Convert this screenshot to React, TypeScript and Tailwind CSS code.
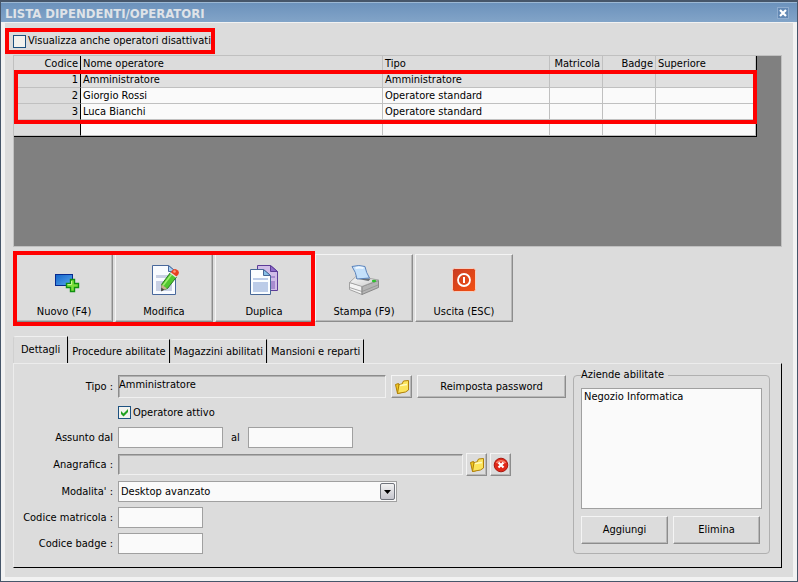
import type { ReactNode } from "react";

const operators = [
  { code: 1, name: "Amministratore", type: "Amministratore" },
  { code: 2, name: "Giorgio Rossi", type: "Operatore standard" },
  { code: 3, name: "Luca Bianchi", type: "Operatore standard" },
];

const tabs = ["Dettagli", "Procedure abilitate", "Magazzini abilitati", "Mansioni e reparti"];

const raised =
  "border border-t-[#f4f4f4] border-l-[#f4f4f4] border-r-[#8c8c8c] border-b-[#8c8c8c] bg-[#dcdcdc] shadow-[inset_-1px_-1px_0_#b8b8b8]";
const sunken =
  "border border-t-[#8c8c8c] border-l-[#8c8c8c] border-r-[#f0f0f0] border-b-[#f0f0f0] bg-[#dcdcdc] shadow-[inset_1px_1px_0_#b0b0b0]";
const textBox = "h-[21px] border border-[#a0a0a0] bg-[#fafafa] px-1 outline-none";

function NewIcon() {
  return (
    <svg width="32" height="32" viewBox="0 0 32 32">
      <defs>
        <linearGradient id="screen" x1="0" y1="0" x2="1" y2="1">
          <stop offset="0" stopColor="#1264c8" />
          <stop offset="1" stopColor="#5aa8f0" />
        </linearGradient>
      </defs>
      <rect x="7.5" y="10.5" width="17" height="11" fill="url(#screen)" stroke="#062a90" />
      <path
        d="M22.5 15.5h4v4h4v4h-4v4h-4v-4h-4v-4h4z"
        fill="#7ce03c"
        stroke="#109010"
        strokeWidth="1.4"
      />
      <path d="M23.5 17v3.5h-4" fill="none" stroke="#c8f890" />
    </svg>
  );
}

function EditIcon() {
  return (
    <svg width="32" height="32" viewBox="0 0 32 32">
      <path d="M4.5 1.5h16l7 6v23h-23z" fill="#f8fbff" stroke="#48689c" />
      <path d="M20.5 1.5v6h7z" fill="#a8d0f4" stroke="#48689c" />
      <path d="M8 11h16v3H8zM8 17h16v10H8z" fill="#c8d0e4" />
      <path d="M22.5 8.5l6 4.5-9 11.5-5.5 1.5-.5-5.5z" fill="#50c830" stroke="#2c7820" />
      <path d="M23.5 10.5L15 21.5" stroke="#a0f070" strokeWidth="1.5" />
      <path d="M13.5 20.5l5.500 4-6 2.5z" fill="#c8b090" />
      <path d="M13.3 23.5l3 2.2-3.3 1.8z" fill="#444" />
      <path d="M22.5 8.5l6 4.5" stroke="#e8e8e8" strokeWidth="2" />
      <path d="M24 6.5q3-3 6 0 2.5 3-1.5 6l-5.5-4z" fill="#e84020" />
      <circle cx="26.5" cy="7.5" r="1.3" fill="#ff9878" />
    </svg>
  );
}

function CopyIcon() {
  return (
    <svg width="32" height="32" viewBox="0 0 32 32">
      <path d="M9.5 1.5h13l7 6v19h-20z" fill="#d0bce8" stroke="#5c3c98" />
      <path d="M22.5 1.5v6h7z" fill="#8c68c8" stroke="#5c3c98" />
      <path d="M23 12h4v2h-4zM23 17h4v8h-4z" fill="#a88cd0" />
      <path d="M2.5 5.5h13l7 6v19h-20z" fill="#fafdff" stroke="#486898" />
      <path d="M15.5 5.5v6h7z" fill="#88c0e8" stroke="#486898" />
      <path d="M5 14h15v2H5zM5 18h15v10H5z" fill="#bccce8" />
    </svg>
  );
}

function PrinterIcon() {
  return (
    <svg width="32" height="32" viewBox="0 0 32 32">
      <defs>
        <linearGradient id="lid" x1="0" y1="0" x2="1" y2="1">
          <stop offset="0" stopColor="#fafafa" />
          <stop offset="1" stopColor="#cccccc" />
        </linearGradient>
      </defs>
      <path d="M1.5 18.5v7L14 30.5V22z" fill="#f4f4f4" stroke="#909090" strokeWidth=".8" />
      <path d="M14 22.5l16.5-6v7L14 30.5z" fill="#b4b4b4" stroke="#787878" strokeWidth=".8" />
      <path d="M1.5 18.5L8.5 12l22 4L14 22.5z" fill="url(#lid)" stroke="#989898" strokeWidth=".8" />
      <path d="M7.5 14.500l2-1.500 13 2-2 2z" fill="#6c7074" />
      <path d="M4 2.500q7-2 13 0 1 6 4.500 11.500L9 15Q8 8 4 2.500z" fill="#c4e0fa" stroke="#5c84bc" />
      <path d="M7.5 4q4-1 8 0" fill="none" stroke="#f0f8ff" strokeWidth="2" />
      <path d="M1.5 23.500L14 27.500 30 21" fill="none" stroke="#909090" strokeWidth=".8" />
      <ellipse cx="26" cy="17" rx="2.2" ry="1.3" fill="#30c030" />
    </svg>
  );
}

function PowerIcon() {
  return (
    <svg width="32" height="32" viewBox="0 0 32 32">
      <defs>
        <linearGradient id="power" x1="0" y1="0" x2="1" y2="1">
          <stop offset="0" stopColor="#c83c24" />
          <stop offset="1" stopColor="#f45010" />
        </linearGradient>
      </defs>
      <rect x="4.5" y="4.5" width="23" height="23" rx="2" fill="url(#power)" stroke="#f8d0c0" />
      <circle cx="16" cy="16" r="6" fill="none" stroke="#fff" strokeWidth="1.8" />
      <path d="M16 13v6" stroke="#fff" strokeWidth="2" />
    </svg>
  );
}

function FolderIcon() {
  return (
    <svg width="16" height="16" viewBox="0 0 16 16">
      <path d="M1.5 5.5l3-1 3 9-4 1z" fill="#f0c820" stroke="#b08008" />
      <path d="M3.5 14.5l1.5-9 3-.5 1.5-3 5-.5v9.5l-3 2z" fill="#fce45c" stroke="#b08008" />
      <path d="M6 6.5l7-1" stroke="#fffbc0" strokeWidth="1.5" />
    </svg>
  );
}

function RemoveIcon() {
  return (
    <svg width="16" height="16" viewBox="0 0 16 16">
      <circle cx="8" cy="8" r="6.8" fill="#e02818" stroke="#a81810" />
      <path d="M3.5 6a5 4 0 019 0" fill="none" stroke="#f88870" strokeWidth="1.5" />
      <path d="M5.5 5.5l5 5m0-5l-5 5" stroke="#fff" strokeWidth="2.2" />
    </svg>
  );
}

const actions = [
  { label: "Nuovo (F4)", icon: <NewIcon /> },
  { label: "Modifica", icon: <EditIcon /> },
  { label: "Duplica", icon: <CopyIcon /> },
  { label: "Stampa (F9)", icon: <PrinterIcon /> },
  { label: "Uscita (ESC)", icon: <PowerIcon /> },
];

function ActionButton({ label, icon }: { label: string; icon: ReactNode }) {
  return (
    <button type="button" className={`flex h-[68px] w-[98px] flex-col items-center gap-[9px] pt-[9px] ${raised}`}>
      {icon}
      <span>{label}</span>
    </button>
  );
}

function CheckBox({ label, checked }: { label: string; checked?: boolean }) {
  return (
    <label className="flex items-center gap-[2px]">
      <span className="grid">
        <input
          type="checkbox"
          defaultChecked={checked}
          className="peer col-start-1 row-start-1 size-[13px] appearance-none border border-[#1c5180] bg-[#f2f2ee]"
        />
        <svg
          viewBox="0 0 13 13"
          className="pointer-events-none invisible col-start-1 row-start-1 size-[13px] peer-checked:visible"
        >
          <path d="M3 5v3l2.5 2.5L10 6V3L5.5 7.5z" fill="#21a121" />
        </svg>
      </span>
      {label}
    </label>
  );
}

function FieldLabel({ id, children }: { id: string; children: ReactNode }) {
  return (
    <label htmlFor={id} className="pr-[5px] text-right whitespace-nowrap">
      {children}
    </label>
  );
}

function OperatorTable() {
  const cell = "h-4 border-r border-b border-[#c0c0c0] px-[2px] pt-px pb-0 whitespace-nowrap";
  const codeCell = "h-4 border-r border-b border-r-black border-b-[#c0c0c0] bg-[#dcdcdc] px-[2px] pt-px pb-0 text-right";
  return (
    <div className="h-[192px] border border-[#c0c0c0] bg-[#808080] pr-6">
      <div className="relative">
        <table className="w-full table-fixed border-separate border-spacing-0 border-r border-b border-black text-left">
          <colgroup>
            <col className="w-[67px]" />
            <col />
            <col className="w-[167px]" />
            <col className="w-[53px]" />
            <col className="w-[53px]" />
            <col className="w-[100px]" />
          </colgroup>
          <thead className="bg-[#dcdcdc]">
            <tr>
              <th className={`${codeCell} font-normal`}>Codice</th>
              <th className={`${cell} font-normal`}>Nome operatore</th>
              <th className={`${cell} font-normal`}>Tipo</th>
              <th className={`${cell} text-right font-normal`}>Matricola</th>
              <th className={`${cell} text-right font-normal`}>Badge</th>
              <th className={`${cell} font-normal`}>Superiore</th>
            </tr>
          </thead>
          <tbody className="bg-[#fafafa]">
            {operators.map((op) => (
              <tr key={op.code} className="first:bg-[#e0e0e0]">
                <td className={codeCell}>{op.code}</td>
                <td className={cell}>{op.name}</td>
                <td className={cell}>{op.type}</td>
                <td className={cell} />
                <td className={cell} />
                <td className={cell} />
              </tr>
            ))}
            <tr>
              <td className={codeCell} />
              <td className={cell} />
              <td className={cell} />
              <td className={cell} />
              <td className={cell} />
              <td className={cell} />
            </tr>
          </tbody>
        </table>
        {/* Highlight around the operator rows */}
        <div className="pointer-events-none absolute inset-x-0 top-[14px] h-[54px] border-4 border-[#ff0000]" />
      </div>
    </div>
  );
}

function Details() {
  return (
    <div className="grid flex-1 grid-cols-[104px_1fr] content-start items-center gap-y-[5px]">
      <FieldLabel id="tipo">Tipo :</FieldLabel>
      <div className="flex h-[23px] gap-[5px]">
        <input id="tipo" readOnly defaultValue="Amministratore" className={`min-w-0 flex-1 pb-1 outline-none ${sunken}`} />
        <button type="button" aria-label="Scegli tipo" className={`grid w-[21px] place-items-center ${raised}`}>
          <FolderIcon />
        </button>
        <button type="button" className={`w-[149px] ${raised}`}>
          Reimposta password
        </button>
      </div>

      <div className="col-start-2 flex h-[19px] items-center">
        <CheckBox label="Operatore attivo" checked />
      </div>

      <FieldLabel id="dal">Assunto dal</FieldLabel>
      <div className="flex items-center gap-2">
        <input id="dal" className={`w-[105px] ${textBox}`} />
        <label htmlFor="al">al</label>
        <input id="al" className={`w-[105px] ${textBox}`} />
      </div>

      <FieldLabel id="anagrafica">Anagrafica :</FieldLabel>
      <div className="flex h-[23px] items-center gap-[3px] pr-[55px]">
        <input id="anagrafica" readOnly className={`h-[21px] min-w-0 flex-1 outline-none ${sunken}`} />
        <button type="button" aria-label="Scegli anagrafica" className={`grid h-[23px] w-[21px] place-items-center ${raised}`}>
          <FolderIcon />
        </button>
        <button type="button" aria-label="Rimuovi anagrafica" className={`grid h-[23px] w-[21px] place-items-center ${raised}`}>
          <RemoveIcon />
        </button>
      </div>

      <FieldLabel id="modalita">Modalita' :</FieldLabel>
      <div className="grid w-[279px] items-center">
        <select
          id="modalita"
          className="col-start-1 row-start-1 h-[21px] appearance-none border border-[#a0a0a0] bg-[#fafafa] px-[2px] outline-none"
        >
          <option>Desktop avanzato</option>
        </select>
        <svg width="15" height="17" viewBox="0 0 15 17" className="pointer-events-none col-start-1 row-start-1 mr-[2px] justify-self-end">
          <defs>
            <linearGradient id="drop" x1="0" y1="0" x2="0" y2="1">
              <stop offset="0" stopColor="#f4f4f4" />
              <stop offset="1" stopColor="#c4c4cc" />
            </linearGradient>
          </defs>
          <rect x=".5" y=".5" width="14" height="16" rx="1.5" fill="url(#drop)" stroke="#70747c" />
          <path d="M4 7h7l-3.5 4z" fill="#000" />
        </svg>
      </div>

      <FieldLabel id="matricola">Codice matricola :</FieldLabel>
      <input id="matricola" className={`w-[85px] ${textBox}`} />

      <FieldLabel id="badge">Codice badge :</FieldLabel>
      <input id="badge" className={`w-[85px] ${textBox}`} />
    </div>
  );
}

function Companies() {
  return (
    <fieldset className="flex w-[197px] flex-col rounded-[4px] border border-[#b0b0b0] px-[7px] pb-[9px]">
      <legend className="pr-1 leading-4">Aziende abilitate</legend>
      <select
        size={8}
        aria-label="Aziende abilitate"
        className="mt-[5px] h-[121px] w-full appearance-none overflow-hidden border border-[#a0a0a0] bg-[#fafafa] outline-none"
      >
        <option className="px-[2px] py-px">Negozio Informatica</option>
      </select>
      <div className="mt-[7px] flex gap-[5px] pr-[2px]">
        <button type="button" className={`h-7 flex-1 ${raised}`}>Aggiungi</button>
        <button type="button" className={`h-7 flex-1 ${raised}`}>Elimina</button>
      </div>
    </fieldset>
  );
}

export default function App() {
  return (
    <div className="flex min-h-screen flex-col border-t-2 border-r border-b border-l border-[#46566a] bg-[#dcdcdc] font-['DejaVu_Sans_Condensed','DejaVu_Sans',sans-serif] text-[11px] leading-[14px] text-black">
      <header className="flex h-5 items-center justify-between border-t border-[#9cb8d4] bg-linear-to-b from-[#6c92bc] to-[#82a4c8] pr-2 pl-1">
        <h1 className="pt-[2px] text-[13px] font-bold text-[#dfe3e8]">LISTA DIPENDENTI/OPERATORI</h1>
        <button type="button" aria-label="Chiudi" className="grid size-3 place-items-center border border-[#8facce] bg-[#6288b4]">
          <svg width="8" height="8" viewBox="0 0 8 8">
            <path d="M1 1l6 6M7 1L1 7" stroke="#fff" strokeWidth="2.2" />
          </svg>
        </button>
      </header>

      <main className="flex flex-1 flex-col border-4 border-t border-[#f2f2f2] pr-[11px] pb-[9px] pl-2">
        <div className="mt-[5px] -ml-2 flex">
          <div className="border-4 border-[#ff0000] py-[2px] pl-1">
            <CheckBox label="Visualizza anche operatori disattivati" />
          </div>
        </div>

        <div className="mt-px">
          <OperatorTable />
        </div>

        <div className="relative mt-[7px] flex gap-[2px] pl-[2px]">
          {actions.map((action) => (
            <ActionButton key={action.label} {...action} />
          ))}
          {/* Highlight around the first three actions */}
          <div className="pointer-events-none absolute -top-[3px] left-0 h-[75px] w-[302px] border-4 border-[#ff0000]" />
        </div>

        <div role="tablist" className="mt-[14px] flex items-end">
          {tabs.map((tab, i) => (
            <button
              key={tab}
              type="button"
              role="tab"
              aria-selected={i === 0}
              className="h-6 rounded-tl-[3px] border-t border-r border-l border-t-[#f0f0f0] border-r-black border-l-[#d0d0d0] px-[3px] aria-selected:h-[27px] aria-selected:px-[7px]"
            >
              {tab}
            </button>
          ))}
        </div>
        <section className="flex flex-1 items-start gap-[7px] border border-t-[#ececec] border-r-black border-b-black border-l-[#ececec] pr-[11px]">
          <div className="flex flex-1 pt-[11px]">
            <Details />
          </div>
          <div className="pt-[3px]">
            <Companies />
          </div>
        </section>
      </main>
    </div>
  );
}
